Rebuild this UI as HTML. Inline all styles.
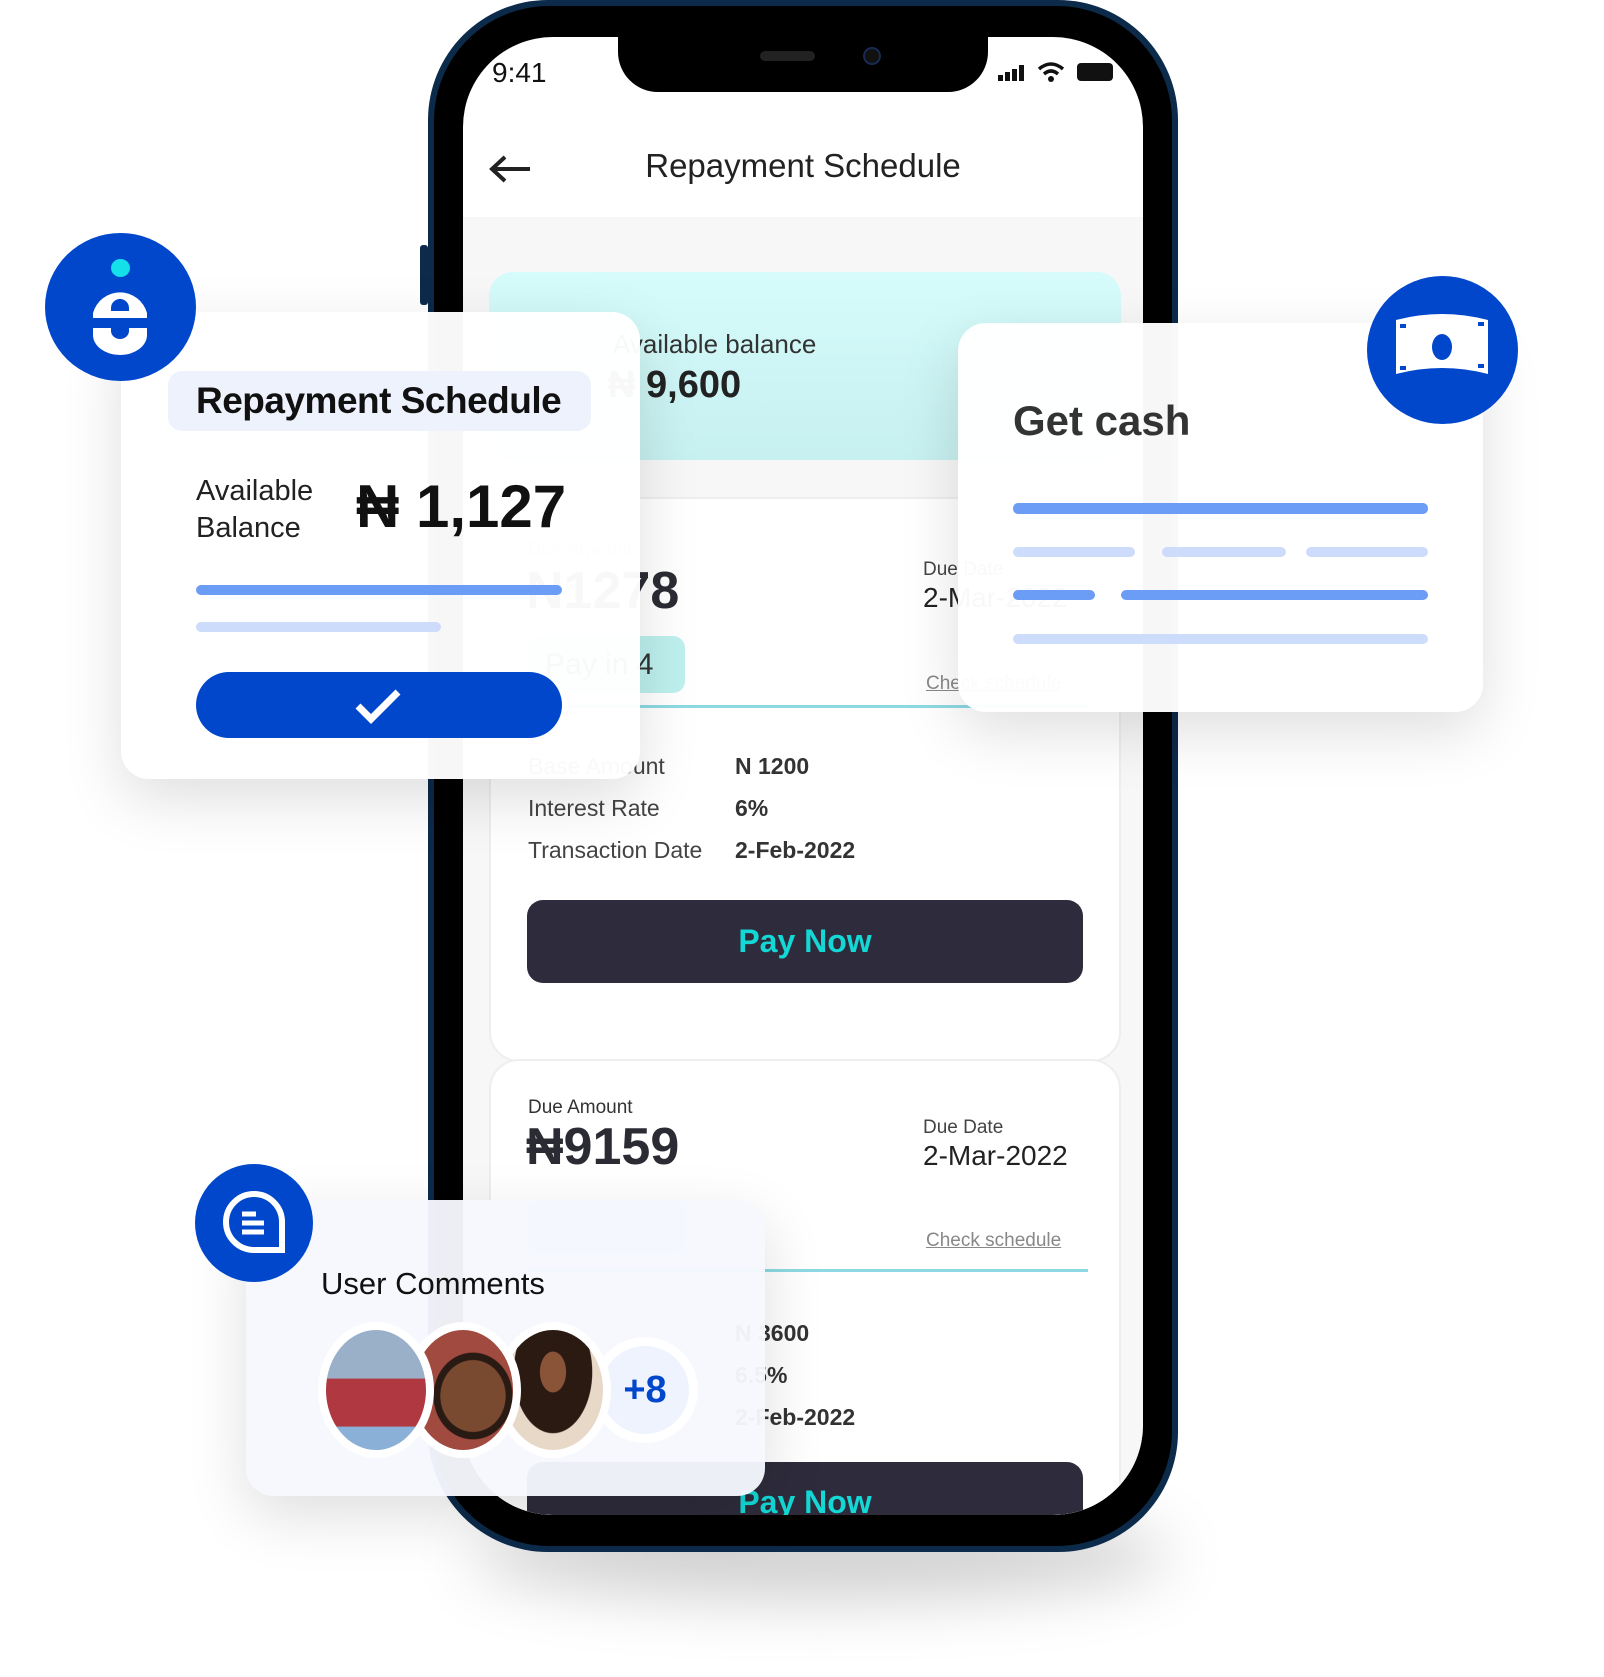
<!DOCTYPE html>
<html><head><meta charset="utf-8"><style>
*{margin:0;padding:0;box-sizing:border-box}
body{width:1604px;height:1677px;background:#fff;position:relative;overflow:hidden;font-family:"Liberation Sans",sans-serif}
.abs{position:absolute}
.card{position:absolute;border-radius:28px;box-shadow:0 20px 60px rgba(0,0,0,.13)}
.circ{position:absolute;border-radius:50%;background:#0047cc}
.bar{position:absolute;height:10px;border-radius:5px}
</style></head><body>
<div class="abs" style="left:470px;top:1510px;width:700px;height:90px;border-radius:50%;background:rgba(0,0,0,.18);filter:blur(30px)"></div>
<div class="abs" style="left:428px;top:0;width:750px;height:1552px;border-radius:120px;background:#0c2a4a"></div>
<div class="abs" style="left:434px;top:6px;width:738px;height:1540px;border-radius:115px;background:#000"></div>
<div class="abs" style="left:420px;top:245px;width:8px;height:60px;border-radius:3px;background:#0c2a4a"></div>
<div class="abs" style="left:463px;top:37px;width:680px;height:1478px;border-radius:90px;background:#fff;overflow:hidden">
  <div class="abs" style="left:155px;top:0;width:370px;height:55px;background:#000;border-radius:0 0 40px 40px"></div>
  <div class="abs" style="left:297px;top:14px;width:55px;height:10px;border-radius:5px;background:#222"></div>
  <div class="abs" style="left:400px;top:10px;width:18px;height:18px;border-radius:50%;background:#111;border:2px solid #1a2a55"></div>
  <div class="abs" style="left:29px;top:20px;font-size:28px;color:#111">9:41</div>
  <div class="abs" style="left:535px;top:28px;width:34px;height:16px">
    <div class="abs" style="left:0;top:10px;width:5px;height:6px;background:#111"></div>
    <div class="abs" style="left:7px;top:7px;width:5px;height:9px;background:#111"></div>
    <div class="abs" style="left:14px;top:4px;width:5px;height:12px;background:#111"></div>
    <div class="abs" style="left:21px;top:0;width:5px;height:16px;background:#111"></div>
  </div>
  <svg class="abs" style="left:574px;top:24px" width="28" height="22"><path d="M2 8Q14 -2 26 8" stroke="#111" stroke-width="3.5" fill="none"/><path d="M7 13Q14 7 21 13" stroke="#111" stroke-width="3.5" fill="none"/><circle cx="14" cy="18" r="3" fill="#111"/></svg>
  <div class="abs" style="left:614px;top:26px;width:36px;height:18px;border-radius:4px;background:#111"></div>
  <svg class="abs" style="left:25px;top:117px" width="44" height="30"><path d="M42 15H4M17 3L4 15l13 12" stroke="#222" stroke-width="4" fill="none"/></svg>
  <div class="abs" style="left:0;width:680px;top:110px;text-align:center;font-size:33px;color:#222">Repayment Schedule</div>
  <div class="abs" style="left:0;top:180px;width:680px;height:1300px;background:#f7f7f8"></div>
  <div class="abs" style="left:26px;top:235px;width:632px;height:188px;border-radius:24px;background:linear-gradient(#d6fbfb,#c7f0f0)"></div>
  <div class="abs" style="left:150px;top:292px;font-size:26px;color:#333">Available balance</div>
  <div class="abs" style="left:145px;top:327px;font-size:38px;font-weight:bold;color:#222">₦ 9,600</div>
  <div class="abs" style="left:26px;top:460px;width:632px;height:565px;border-radius:30px;background:#fff;border:2px solid #eee"></div>
  <div class="abs" style="left:65px;top:503px;font-size:19px;color:#bbb">Due Amount</div>
  <div class="abs" style="left:63px;top:524px;font-size:52px;font-weight:bold;color:#2b2b33">N1278</div>
  <div class="abs" style="left:460px;top:522px;font-size:19px;color:#444">Due Date</div>
  <div class="abs" style="left:460px;top:545px;font-size:28px;color:#222">2-Mar-2022</div>
  <div class="abs" style="left:64px;top:599px;width:158px;height:57px;border-radius:12px;background:#bdf0ee;font-size:30px;color:#333;line-height:57px;padding-left:18px">Pay in 4</div>
  <div class="abs" style="left:463px;top:636px;font-size:19px;color:#888;text-decoration:underline">Check schedule</div>
  <div class="abs" style="left:63px;top:668px;width:562px;height:3px;background:#8dd9e3"></div>
  <div class="abs" style="left:65px;top:708px;font-size:23px;color:#444;line-height:42px">Base Amount<br>Interest Rate<br>Transaction Date</div>
  <div class="abs" style="left:272px;top:708px;font-size:23px;color:#333;font-weight:bold;line-height:42px">N 1200<br>6%<br>2-Feb-2022</div>
  <div class="abs" style="left:64px;top:863px;width:556px;height:83px;border-radius:16px;background:#2e2c3c;color:#13d8d5;font-size:32px;font-weight:bold;text-align:center;line-height:83px">Pay Now</div>
  <div class="abs" style="left:26px;top:1022px;width:632px;height:600px;border-radius:30px;background:#fff;border:2px solid #eee"></div>
  <div class="abs" style="left:65px;top:1060px;font-size:19px;color:#333">Due Amount</div>
  <div class="abs" style="left:63px;top:1080px;font-size:52px;font-weight:bold;color:#2b2b33">₦9159</div>
  <div class="abs" style="left:460px;top:1080px;font-size:19px;color:#444">Due Date</div>
  <div class="abs" style="left:460px;top:1103px;font-size:28px;color:#222">2-Mar-2022</div>
  <div class="abs" style="left:64px;top:1164px;width:158px;height:52px;border-radius:12px;background:#bdf0ee"></div>
  <div class="abs" style="left:463px;top:1193px;font-size:19px;color:#888;text-decoration:underline">Check schedule</div>
  <div class="abs" style="left:63px;top:1232px;width:562px;height:3px;background:#8dd9e3"></div>
  <div class="abs" style="left:272px;top:1275px;font-size:23px;color:#333;font-weight:bold;line-height:42px">N 3600<br>6.5%<br>2-Feb-2022</div>
  <div class="abs" style="left:64px;top:1425px;width:556px;height:83px;border-radius:16px;background:#2e2c3c;color:#13d8d5;font-size:32px;font-weight:bold;text-align:center;line-height:80px">Pay Now</div>
</div>
<div class="card" style="left:121px;top:312px;width:519px;height:467px;background:rgba(255,255,255,.97)"></div>
<div class="abs" style="left:168px;top:371px;width:423px;height:60px;border-radius:14px;background:#eef2fc;font-size:37px;font-weight:bold;color:#111;padding-left:28px;line-height:60px;letter-spacing:-0.5px">Repayment Schedule</div>
<div class="abs" style="left:196px;top:473px;font-size:29px;color:#222;line-height:37px">Available<br>Balance</div>
<div class="abs" style="left:356px;top:472px;font-size:60px;font-weight:bold;color:#111">₦ 1,127</div>
<div class="bar" style="left:196px;top:585px;width:366px;background:#6c9df6"></div>
<div class="bar" style="left:196px;top:622px;width:245px;background:#cddcfb"></div>
<div class="abs" style="left:196px;top:672px;width:366px;height:66px;border-radius:33px;background:#0047cc"></div>
<svg class="abs" style="left:353px;top:686px" width="50" height="40"><path d="M5 20l13 13L45 6" stroke="#fff" stroke-width="7" fill="none"/></svg>
<div class="circ" style="left:45px;top:233px;width:151px;height:148px"></div>
<div class="abs" style="left:111px;top:259px;width:19px;height:18px;border-radius:50%;background:#13e0e8"></div>
<svg class="abs" style="left:92px;top:285px" width="58" height="70"><path d="M1 33V28A28 28 0 0 1 55 28V33ZM19 26H37V23A9 9 0 0 0 19 23Z" fill="#fff" fill-rule="evenodd"/><path d="M1 43H55V50A27 20 0 0 1 1 50ZM19 43V46A9 8 0 0 0 37 46V43Z" fill="#fff" fill-rule="evenodd"/></svg>
<div class="card" style="left:958px;top:323px;width:525px;height:389px;background:rgba(255,255,255,.97)"></div>
<div class="abs" style="left:1013px;top:397px;font-size:42px;font-weight:bold;color:#333">Get cash</div>
<div class="bar" style="left:1013px;top:503px;width:415px;height:11px;background:#6c9df6"></div>
<div class="bar" style="left:1013px;top:547px;width:122px;background:#cddcfb"></div>
<div class="bar" style="left:1162px;top:547px;width:124px;background:#cddcfb"></div>
<div class="bar" style="left:1306px;top:547px;width:122px;background:#cddcfb"></div>
<div class="bar" style="left:1013px;top:590px;width:82px;background:#6c9df6"></div>
<div class="bar" style="left:1121px;top:590px;width:307px;background:#6c9df6"></div>
<div class="bar" style="left:1013px;top:634px;width:415px;background:#cddcfb"></div>
<div class="circ" style="left:1367px;top:276px;width:151px;height:148px"></div>
<svg class="abs" style="left:1394px;top:312px" width="98" height="72"><path d="M2 8Q48 -4 94 8V62Q48 50 2 62Z" fill="#fff"/><ellipse cx="48" cy="35" rx="10" ry="13" fill="#0047cc"/><path d="M6 14L12 14M6 56L12 56M84 12L90 12M84 54L90 54" stroke="#0047cc" stroke-width="4"/></svg>
<div class="card" style="left:246px;top:1200px;width:519px;height:296px;background:rgba(246,248,254,.96)"></div>
<div class="abs" style="left:321px;top:1266px;font-size:31px;color:#111">User Comments</div>
<div class="abs" style="left:592px;top:1337px;width:106px;height:106px;border-radius:50%;background:#eef3fd;border:9px solid #fff;color:#0047cc;font-size:38px;font-weight:bold;text-align:center;line-height:88px">+8</div>
<div class="abs" style="left:495px;top:1322px;width:116px;height:136px;border-radius:50%;border:8px solid #fff;background:radial-gradient(ellipse at 50% 35%,#8a5438 0 18%,#2a1a12 19% 55%,#e8d8c8 56%)"></div>
<div class="abs" style="left:405px;top:1322px;width:116px;height:136px;border-radius:50%;border:8px solid #fff;background:radial-gradient(ellipse at 60% 55%,#7a4a30 0 38%,#2a1a14 39% 46%,#a04a40 47%)"></div>
<div class="abs" style="left:318px;top:1322px;width:116px;height:136px;border-radius:50%;border:8px solid #fff;background:linear-gradient(#9ab0c8 0 40%,#b03840 41% 80%,#8ab0d8 81%)"></div>
<div class="circ" style="left:195px;top:1164px;width:118px;height:118px"></div>
<svg class="abs" style="left:222px;top:1190px" width="66" height="66"><path d="M32 4A28 28 0 1 0 32 60H60V32A28 28 0 0 0 32 4Z" fill="none" stroke="#fff" stroke-width="6"/><path d="M20 24H34M20 33H42M20 42H42" stroke="#fff" stroke-width="5"/></svg>
</body></html>
